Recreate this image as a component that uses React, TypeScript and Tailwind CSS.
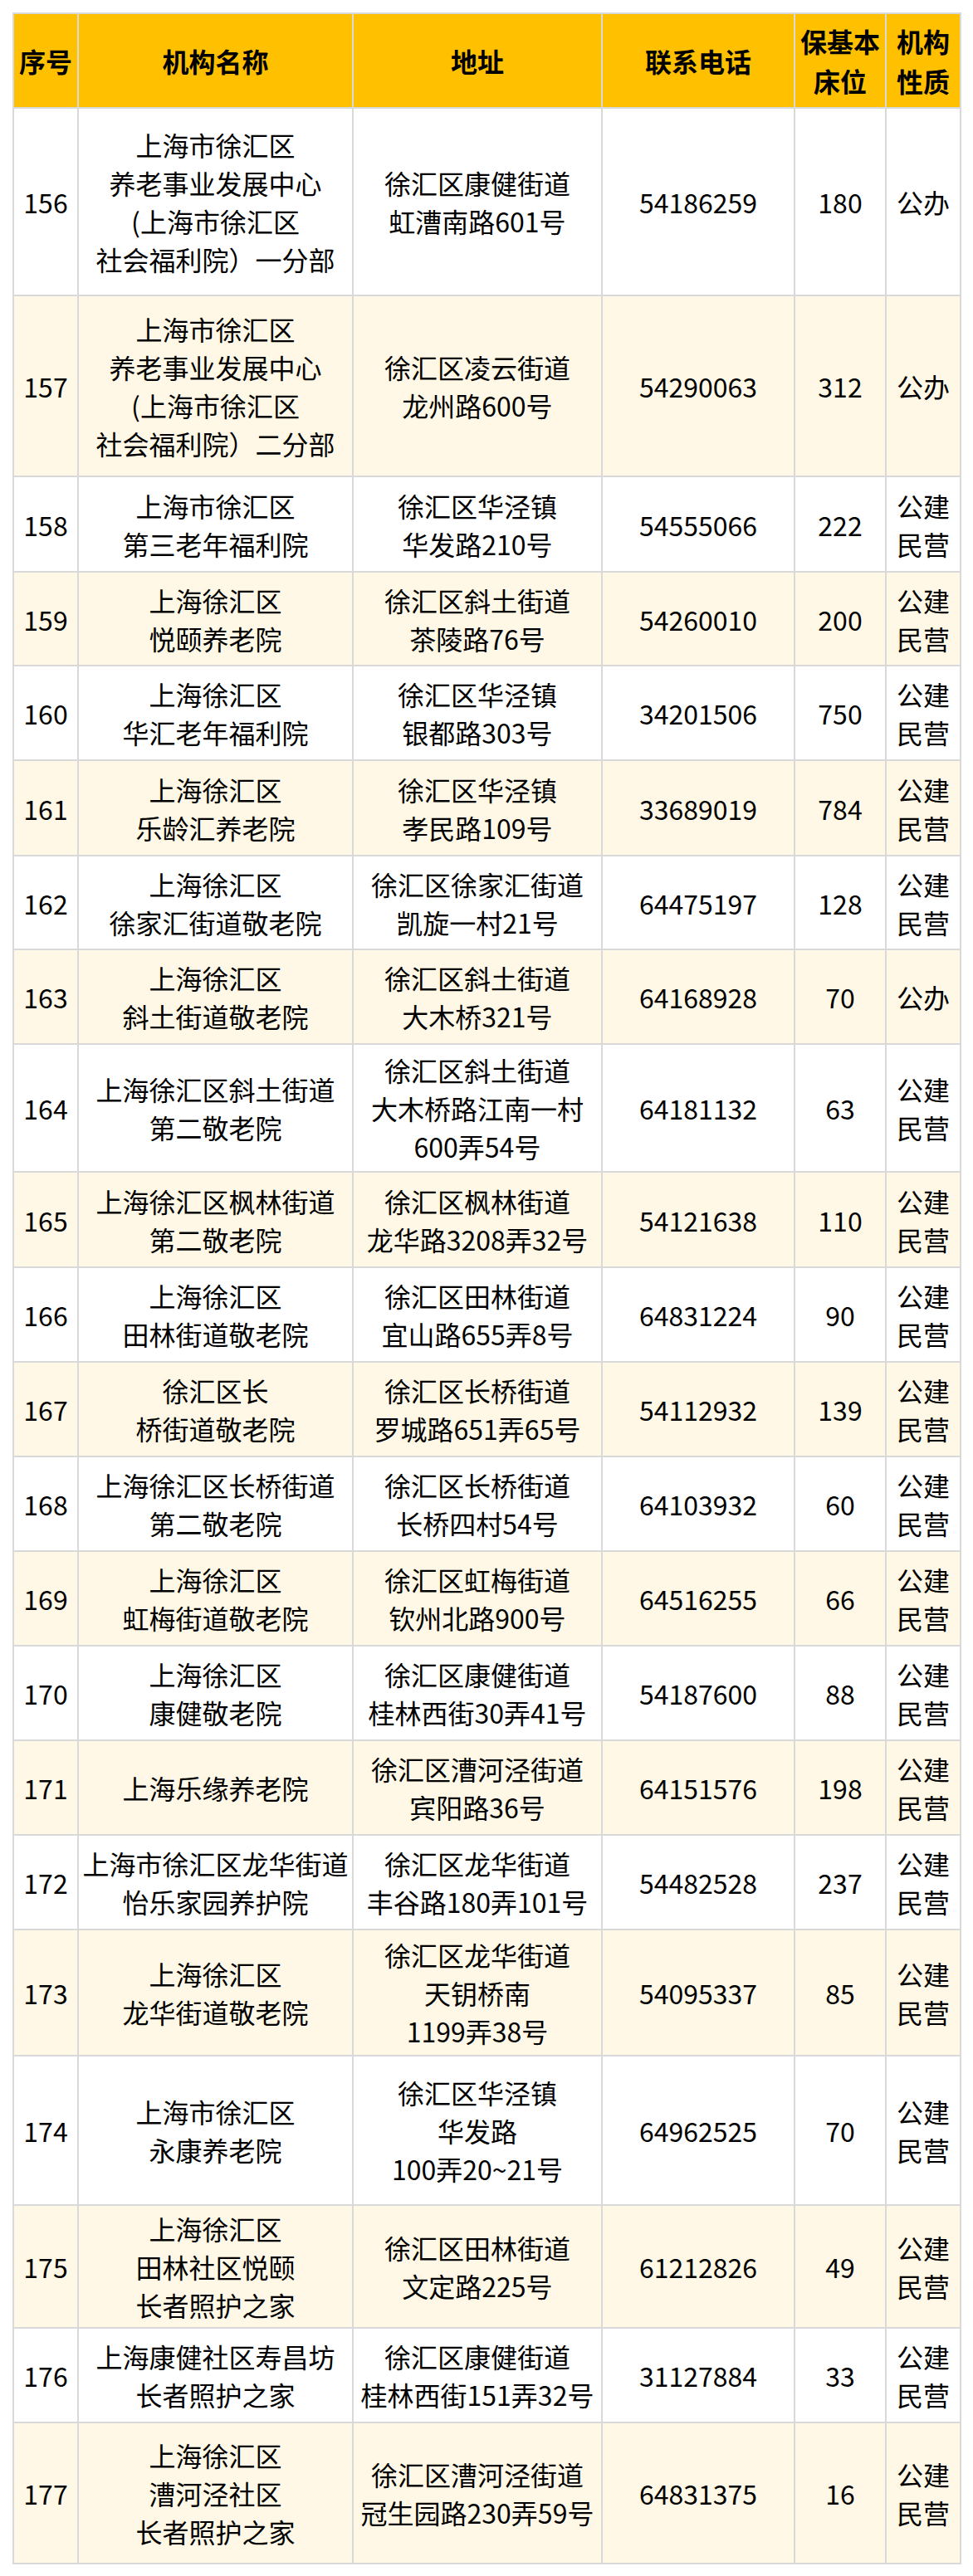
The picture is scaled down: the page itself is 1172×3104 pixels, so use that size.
import React from "react";

type Row = {
  no: string;
  name: string[];
  addr: string[];
  tel: string;
  beds: string;
  kind: string[];
  h: string;
};

const rows: Row[] = [
  { no: "156", name: ["上海市徐汇区", "养老事业发展中心", "(上海市徐汇区", "社会福利院）一分部"], addr: ["徐汇区康健街道", "虹漕南路601号"], tel: "54186259", beds: "180", kind: ["公办"], h: "h-[226px]" },
  { no: "157", name: ["上海市徐汇区", "养老事业发展中心", "(上海市徐汇区", "社会福利院）二分部"], addr: ["徐汇区凌云街道", "龙州路600号"], tel: "54290063", beds: "312", kind: ["公办"], h: "h-[218px]" },
  { no: "158", name: ["上海市徐汇区", "第三老年福利院"], addr: ["徐汇区华泾镇", "华发路210号"], tel: "54555066", beds: "222", kind: ["公建", "民营"], h: "h-[115px]" },
  { no: "159", name: ["上海徐汇区", "悦颐养老院"], addr: ["徐汇区斜土街道", "茶陵路76号"], tel: "54260010", beds: "200", kind: ["公建", "民营"], h: "h-[113px]" },
  { no: "160", name: ["上海徐汇区", "华汇老年福利院"], addr: ["徐汇区华泾镇", "银都路303号"], tel: "34201506", beds: "750", kind: ["公建", "民营"], h: "h-[114px]" },
  { no: "161", name: ["上海徐汇区", "乐龄汇养老院"], addr: ["徐汇区华泾镇", "孝民路109号"], tel: "33689019", beds: "784", kind: ["公建", "民营"], h: "h-[115px]" },
  { no: "162", name: ["上海徐汇区", "徐家汇街道敬老院"], addr: ["徐汇区徐家汇街道", "凯旋一村21号"], tel: "64475197", beds: "128", kind: ["公建", "民营"], h: "h-[113px]" },
  { no: "163", name: ["上海徐汇区", "斜土街道敬老院"], addr: ["徐汇区斜土街道", "大木桥321号"], tel: "64168928", beds: "70", kind: ["公办"], h: "h-[114px]" },
  { no: "164", name: ["上海徐汇区斜土街道", "第二敬老院"], addr: ["徐汇区斜土街道", "大木桥路江南一村", "600弄54号"], tel: "64181132", beds: "63", kind: ["公建", "民营"], h: "h-[154px]" },
  { no: "165", name: ["上海徐汇区枫林街道", "第二敬老院"], addr: ["徐汇区枫林街道", "龙华路3208弄32号"], tel: "54121638", beds: "110", kind: ["公建", "民营"], h: "h-[115px]" },
  { no: "166", name: ["上海徐汇区", "田林街道敬老院"], addr: ["徐汇区田林街道", "宜山路655弄8号"], tel: "64831224", beds: "90", kind: ["公建", "民营"], h: "h-[114px]" },
  { no: "167", name: ["徐汇区长", "桥街道敬老院"], addr: ["徐汇区长桥街道", "罗城路651弄65号"], tel: "54112932", beds: "139", kind: ["公建", "民营"], h: "h-[114px]" },
  { no: "168", name: ["上海徐汇区长桥街道", "第二敬老院"], addr: ["徐汇区长桥街道", "长桥四村54号"], tel: "64103932", beds: "60", kind: ["公建", "民营"], h: "h-[114px]" },
  { no: "169", name: ["上海徐汇区", "虹梅街道敬老院"], addr: ["徐汇区虹梅街道", "钦州北路900号"], tel: "64516255", beds: "66", kind: ["公建", "民营"], h: "h-[114px]" },
  { no: "170", name: ["上海徐汇区", "康健敬老院"], addr: ["徐汇区康健街道", "桂林西街30弄41号"], tel: "54187600", beds: "88", kind: ["公建", "民营"], h: "h-[114px]" },
  { no: "171", name: ["上海乐缘养老院"], addr: ["徐汇区漕河泾街道", "宾阳路36号"], tel: "64151576", beds: "198", kind: ["公建", "民营"], h: "h-[114px]" },
  { no: "172", name: ["上海市徐汇区龙华街道", "怡乐家园养护院"], addr: ["徐汇区龙华街道", "丰谷路180弄101号"], tel: "54482528", beds: "237", kind: ["公建", "民营"], h: "h-[114px]" },
  { no: "173", name: ["上海徐汇区", "龙华街道敬老院"], addr: ["徐汇区龙华街道", "天钥桥南", "1199弄38号"], tel: "54095337", beds: "85", kind: ["公建", "民营"], h: "h-[152px]" },
  { no: "174", name: ["上海市徐汇区", "永康养老院"], addr: ["徐汇区华泾镇", "华发路", "100弄20~21号"], tel: "64962525", beds: "70", kind: ["公建", "民营"], h: "h-[180px]" },
  { no: "175", name: ["上海徐汇区", "田林社区悦颐", "长者照护之家"], addr: ["徐汇区田林街道", "文定路225号"], tel: "61212826", beds: "49", kind: ["公建", "民营"], h: "h-[148px]" },
  { no: "176", name: ["上海康健社区寿昌坊", "长者照护之家"], addr: ["徐汇区康健街道", "桂林西街151弄32号"], tel: "31127884", beds: "33", kind: ["公建", "民营"], h: "h-[114px]" },
  { no: "177", name: ["上海徐汇区", "漕河泾社区", "长者照护之家"], addr: ["徐汇区漕河泾街道", "冠生园路230弄59号"], tel: "64831375", beds: "16", kind: ["公建", "民营"], h: "h-[170px]" },
];

const widths = ["w-[78px]", "w-[331px]", "w-[300px]", "w-[232px]", "w-[110px]", "w-[90px]"];

function Lines({ lines }: { lines: string[] }) {
  return (
    <div>
      {lines.map((l, i) => (
        <div key={i} className="whitespace-nowrap">
          {l}
        </div>
      ))}
    </div>
  );
}

function Cell({ idx, children }: { idx: number; children: React.ReactNode }) {
  return (
    <div
      className={`${widths[idx]} shrink-0 h-full flex items-center justify-center text-center border-r-2 border-[#d9d9d9]`}
    >
      {children}
    </div>
  );
}

export default function App() {
  return (
    <div
      className="bg-white w-[1172px] min-h-[3104px] pt-[15px] pl-[15px] text-black"
      style={{ fontFamily: '"Noto Sans CJK SC", "Noto Sans", sans-serif' }}
    >
      <div className="w-[1143px] border-l-2 border-t-2 border-[#d9d9d9]">
        <div className="flex h-[114px] bg-[#ffc000] border-b-2 border-[#d9d9d9] font-bold text-[32px] leading-[48px]">
          <Cell idx={0}>
            <Lines lines={["序号"]} />
          </Cell>
          <Cell idx={1}>
            <Lines lines={["机构名称"]} />
          </Cell>
          <Cell idx={2}>
            <Lines lines={["地址"]} />
          </Cell>
          <Cell idx={3}>
            <Lines lines={["联系电话"]} />
          </Cell>
          <Cell idx={4}>
            <Lines lines={["保基本", "床位"]} />
          </Cell>
          <Cell idx={5}>
            <Lines lines={["机构", "性质"]} />
          </Cell>
        </div>
        {rows.map((r, i) => (
          <div
            key={r.no}
            className={`flex ${r.h} border-b-2 border-[#d9d9d9] text-[32px] leading-[46px] ${
              i % 2 === 1 ? "bg-[#fff8e6]" : "bg-white"
            }`}
          >
            <Cell idx={0}>
              <Lines lines={[r.no]} />
            </Cell>
            <Cell idx={1}>
              <Lines lines={r.name} />
            </Cell>
            <Cell idx={2}>
              <Lines lines={r.addr} />
            </Cell>
            <Cell idx={3}>
              <Lines lines={[r.tel]} />
            </Cell>
            <Cell idx={4}>
              <Lines lines={[r.beds]} />
            </Cell>
            <Cell idx={5}>
              <Lines lines={r.kind} />
            </Cell>
          </div>
        ))}
      </div>
    </div>
  );
}
